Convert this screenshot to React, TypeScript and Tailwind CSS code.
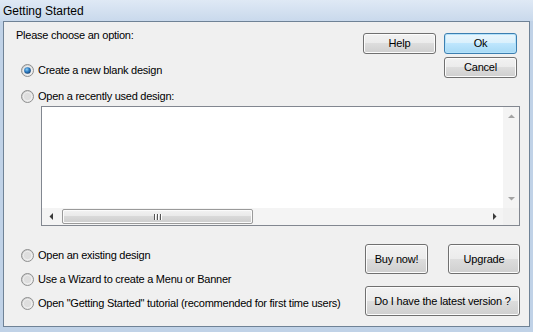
import React from 'react';

const font = { fontFamily: '"Liberation Sans", Arial, sans-serif' };

const Radio: React.FC<{ checked?: boolean; label: string }> = ({ checked, label }) => (
  <div className="flex items-center h-[16px] gap-[4px]">
    <svg width="13" height="13" viewBox="0 0 13 13">
      <defs>
        <linearGradient id="rOuter" x1="0" y1="0" x2="1" y2="1">
          <stop offset="0" stopColor="#c4c4c4" />
          <stop offset="1" stopColor="#f7f7f7" />
        </linearGradient>
        <radialGradient id="rDot" cx="0.4" cy="0.35" r="0.7">
          <stop offset="0" stopColor="#8fd0f5" />
          <stop offset="0.5" stopColor="#2c7dc4" />
          <stop offset="1" stopColor="#173f6e" />
        </radialGradient>
      </defs>
      <circle cx="6.5" cy="6.5" r="6" fill="url(#rOuter)" stroke="#8e8f8f" strokeWidth="1" />
      <circle cx="6.5" cy="6.5" r="4.2" fill="#dedede" stroke="#f4f4f4" strokeWidth="0.8" />
      {checked && <circle cx="6.5" cy="6.5" r="3.3" fill="url(#rDot)" />}
    </svg>
    <span className="text-[11px] leading-[13px] tracking-[-0.25px] text-black whitespace-nowrap">{label}</span>
  </div>
);

const Btn: React.FC<{ label: string; w: string; h: string; primary?: boolean }> = ({ label, w, h, primary }) => (
  <div
    className={`${w} ${h} flex items-center justify-center rounded-[3px] border text-[11px] tracking-[-0.2px] text-black ${
      primary
        ? 'border-[#3c7fb1] bg-[linear-gradient(#eaf6fd_0%,#d9f0fc_50%,#bee6fd_50%,#a7d9f5_100%)] shadow-[inset_0_0_0_1px_#b5e2fa]'
        : 'border-[#707070] bg-[linear-gradient(#f2f2f2_0%,#ebebeb_50%,#dddddd_50%,#cfcfcf_100%)] shadow-[inset_0_0_0_1px_#fcfcfc]'
    }`}
  >
    {label}
  </div>
);

const Arrow: React.FC<{ dir: 'up' | 'down' | 'left' | 'right'; color: string }> = ({ dir, color }) => {
  const pts = {
    up: '0,4 3.5,0.5 7,4',
    down: '0,0 7,0 3.5,3.5',
    left: '4,0 4,7 0.5,3.5',
    right: '0,0 3.5,3.5 0,7',
  }[dir];
  const vertical = dir === 'up' || dir === 'down';
  return (
    <svg width={vertical ? 7 : 4} height={vertical ? 4 : 7} viewBox={vertical ? '0 0 7 4' : '0 0 4 7'}>
      <polygon points={pts} fill={color} />
    </svg>
  );
};

const ListBox: React.FC = () => (
  <div className="ml-[37px] w-[479px] h-[120px] border border-[#828790] grid grid-cols-[1fr_16px] grid-rows-[1fr_17px] bg-white">
    <div className="bg-white" />
    <div className="bg-[#f4f4f4] flex flex-col justify-between items-center py-[7px]">
      <Arrow dir="up" color="#a3a3a3" />
      <Arrow dir="down" color="#a3a3a3" />
    </div>
    <div className="bg-[#f4f4f4] flex items-center">
      <div className="w-[17px] flex justify-center pl-[1px]">
        <Arrow dir="left" color="#3a3a3a" />
      </div>
      <div className="ml-[3px] w-[191px] h-[15px] rounded-[2px] border border-[#9a9a9a] bg-[linear-gradient(#f3f3f3_0%,#e8e8e8_50%,#d9d9d9_50%,#cdcdcd_100%)] shadow-[inset_0_0_0_1px_#fbfbfb] flex items-center justify-center gap-[1px]">
        <div className="w-[2px] h-[6px] border-l border-[#555] bg-white" />
        <div className="w-[2px] h-[6px] border-l border-[#555] bg-white" />
        <div className="w-[2px] h-[6px] border-l border-[#555] bg-white" />
      </div>
      <div className="flex-1" />
      <div className="w-[17px] flex justify-center">
        <Arrow dir="right" color="#3a3a3a" />
      </div>
    </div>
    <div className="bg-[#f0f0f0]" />
  </div>
);

export default function App() {
  return (
    <div className="w-[533px] h-[332px] flex flex-col bg-[#c0d2e7] overflow-hidden" style={font}>
      {/* title bar */}
      <div className="h-[21px] shrink-0 flex items-center pl-[3px] bg-[linear-gradient(#dfe9f5,#c9d9ec)]">
        <span className="text-[12px] text-black">Getting Started</span>
      </div>

      {/* panel */}
      <div className="flex-1 mx-[3px] mb-[5px] border border-[#6f8296] bg-[#f0f0f0] flex flex-col">
        <div className="flex justify-between">
          <div className="pl-[12px] pt-[7px]">
            <div className="text-[11px] leading-[13px] tracking-[-0.25px] text-black">Please choose an option:</div>
            <div className="mt-[20px] pl-[5px]">
              <Radio checked label="Create a new blank design" />
            </div>
          </div>
          <div className="pt-[11px] pr-[12px] flex flex-col items-end gap-[3px]">
            <div className="flex gap-[8px]">
              <Btn label="Help" w="w-[73px]" h="h-[21px]" />
              <Btn label="Ok" w="w-[73px]" h="h-[21px]" primary />
            </div>
            <Btn label="Cancel" w="w-[73px]" h="h-[21px]" />
          </div>
        </div>

        <div className="mt-[10px] pl-[17px]">
          <Radio label="Open a recently used design:" />
        </div>
        <div className="mt-[2px]">
          <ListBox />
        </div>

        <div className="mt-[18px] flex justify-between">
          <div className="pl-[17px] pt-[3px] flex flex-col gap-[8px]">
            <Radio label="Open an existing design" />
            <Radio label="Use a Wizard to create a Menu or Banner" />
            <Radio label={'Open "Getting Started" tutorial (recommended for first time users)'} />
          </div>
          <div className="pr-[9px] flex flex-col gap-[12px]">
            <div className="flex gap-[20px]">
              <Btn label="Buy now!" w="w-[63px]" h="h-[30px]" />
              <Btn label="Upgrade" w="w-[72px]" h="h-[30px]" />
            </div>
            <Btn label="Do I have the latest version ?" w="w-[155px]" h="h-[30px]" />
          </div>
        </div>
      </div>
    </div>
  );
}
